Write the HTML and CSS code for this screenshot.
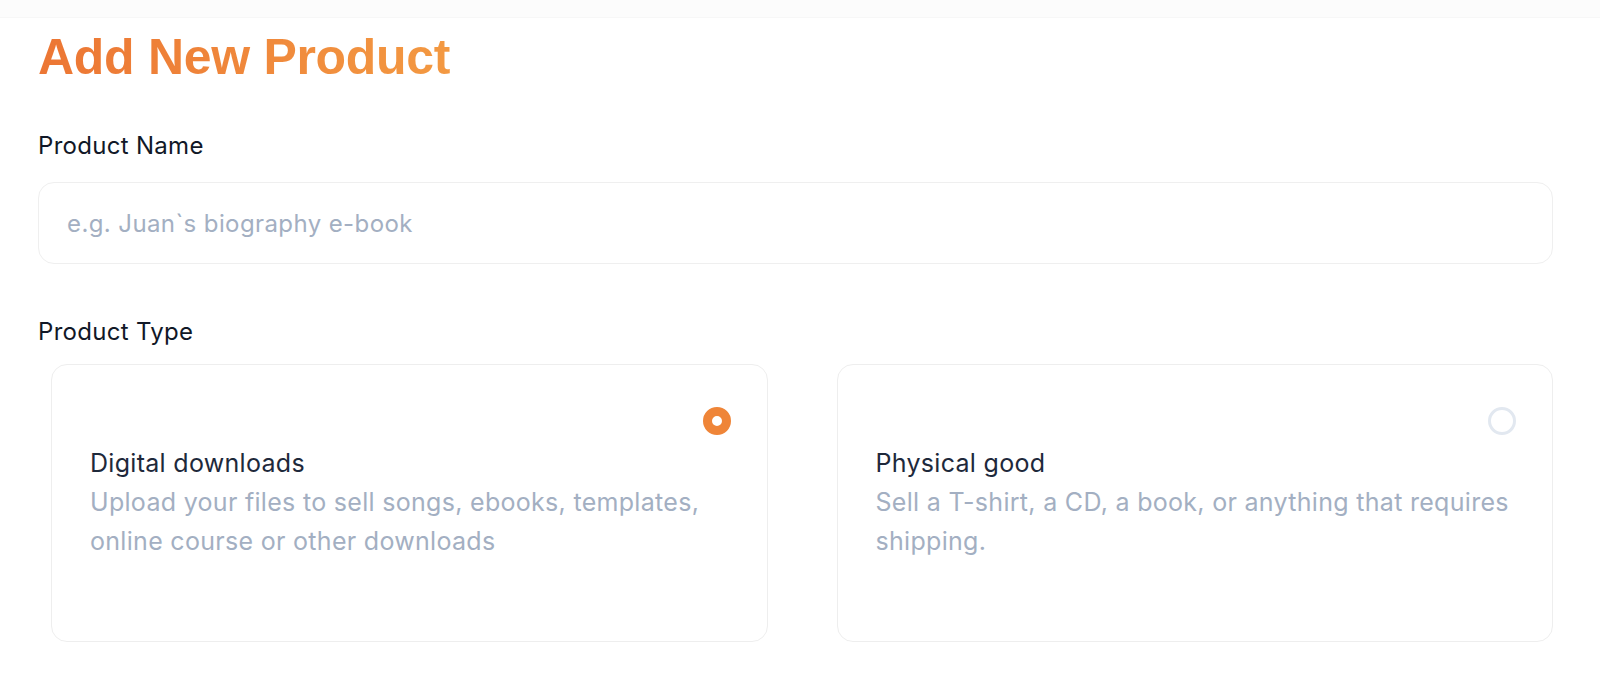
FILE: index.html
```html
<!doctype html>
<html lang="en">
<head>
  <meta charset="UTF-8">
  <meta name="viewport" content="width=device-width, initial-scale=1.0">
  <title>Add New Product</title>
  <link rel="stylesheet" href="styles.css">
</head>
<body>
  <div class="topbar"></div>

  <div class="container">
    <h1 class="page-title">Add New Product</h1>

    <label class="field-label" for="productName">Product Name</label>
    <input type="text" id="productName" class="text-input" placeholder="e.g. Juan`s biography e-book">

    <p class="field-label">Product Type</p>
    <div class="type-grid">
      <label class="type-card">
        <input type="radio" name="type" value="digital" checked>
        <span class="radio-dot"></span>
        <span class="type-title">Digital downloads</span>
        <span class="type-desc">Upload your files to sell songs, ebooks, templates, online course or other downloads</span>
      </label>

      <label class="type-card">
        <input type="radio" name="type" value="physical">
        <span class="radio-dot"></span>
        <span class="type-title">Physical good</span>
        <span class="type-desc">Sell a T-shirt, a CD, a book, or anything that requires shipping.</span>
      </label>
    </div>
  </div>
</body>
</html>
```

FILE: styles.css
```css
body {
  margin: 0;
  background-color: #fff;
  color: #111827;
  font-family: Inter, "Noto Sans", sans-serif;
}

.topbar {
  height: 17px;
  background-color: #fcfcfc;
  border-bottom: 1px solid #f7f7f7;
}

.container {
  padding: 0 47px 0 38px;
}

.page-title {
  margin: 9px 0 0;
  font-family: "Liberation Sans", Arial, sans-serif;
  font-size: 50px;
  font-weight: 700;
  line-height: 60px;
  letter-spacing: -0.3px;
  background: linear-gradient(90deg, #ec7634, #f39942);
  -webkit-background-clip: text;
  background-clip: text;
  color: transparent;
  display: inline-block;
}

.field-label {
  display: block;
  margin: 0;
  font-size: 24px;
  line-height: 30px;
  letter-spacing: 0.3px;
  color: #111827;
}

label.field-label {
  margin-top: 44px;
}

p.field-label {
  margin-top: 53px;
}

.text-input {
  display: block;
  width: 100%;
  height: 82px;
  margin-top: 21px;
  padding: 0 28px;
  box-sizing: border-box;
  border: 1.5px solid #efefef;
  border-radius: 16px;
  font-family: inherit;
  font-size: 24px;
  letter-spacing: 0.4px;
  color: #111827;
  outline: none;
}

.text-input::placeholder {
  color: #a3afc2;
}

.type-grid {
  display: grid;
  grid-template-columns: 1fr 1fr;
  gap: 69px;
  margin: 17px 0 0 13px;
}

.type-card {
  display: flex;
  flex-direction: column;
  height: 278px;
  padding: 42px 36px 0 38px;
  box-sizing: border-box;
  border: 1.5px solid #eeeeee;
  border-radius: 16px;
  cursor: pointer;
}

.type-card input {
  display: none;
}

.radio-dot {
  align-self: flex-end;
  width: 28px;
  height: 28px;
  box-sizing: border-box;
  border: 3px solid #e2e8f0;
  border-radius: 50%;
}

.type-card input:checked + .radio-dot {
  border: 9px solid #ef8538;
}

.type-title {
  margin-top: 9px;
  font-size: 25px;
  line-height: 39px;
  letter-spacing: 0.3px;
  color: #1e293b;
}

.type-desc {
  font-size: 25px;
  line-height: 39px;
  letter-spacing: 0.3px;
  color: #a3afc2;
}
```
